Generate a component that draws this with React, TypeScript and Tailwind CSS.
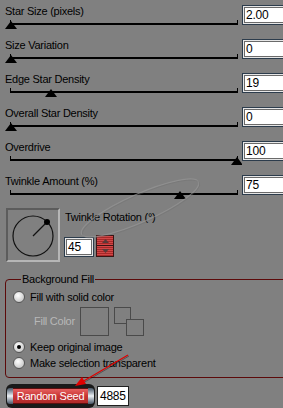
const rows = [
  { label: "Star Size (pixels)", value: "2.00", thumb: 11 },
  { label: "Size Variation", value: "0", thumb: 11 },
  { label: "Edge Star Density", value: "19", thumb: 51 },
  { label: "Overall Star Density", value: "0", thumb: 11 },
  { label: "Overdrive", value: "100", thumb: 237 },
  { label: "Twinkle Amount (%)", value: "75", thumb: 180 },
];

function ValueBox({ value, wide }: { value: string; wide?: boolean }) {
  return (
    <div
      className={
        wide
          ? "h-[20px] w-[60px] shrink-0 border border-[#2c3c4c] bg-[#e6e6e6] p-px"
          : "h-[20px] w-[30px] shrink-0 border border-[#2c3c4c] bg-[#e6e6e6] p-px"
      }
    >
      <div className="h-full border border-[#6a6a6a] bg-white pl-px text-[12px] leading-[14px] tracking-[-0.2px] text-black">
        {value}
      </div>
    </div>
  );
}

function Slider({ thumb }: { thumb: number }) {
  return (
    <svg width="242" height="13" className="mt-[2px] block">
      <rect x="10" y="3" width="228" height="2" fill="#000" />
      <rect x="10" y="0" width="1" height="5" fill="#000" />
      <rect x="237" y="0" width="1" height="5" fill="#000" />
      <polygon points={`${thumb},1 ${thumb - 6},9 ${thumb + 6},9`} fill="#000" />
    </svg>
  );
}

function Radio({ checked }: { checked?: boolean }) {
  return (
    <span className="flex h-[12px] w-[12px] shrink-0 items-center justify-center rounded-full border border-[#555] bg-[radial-gradient(circle_at_40%_35%,#ffffff,#d4d4d4_60%,#b8b8b8)]">
      {checked && <span className="h-[4px] w-[4px] rounded-full bg-black" />}
    </span>
  );
}

export default function App() {
  return (
    <div className="relative h-[408px] w-[283px] overflow-hidden bg-[#808080] font-['Liberation_Sans',Arial,sans-serif] text-[11px] leading-[13px] tracking-[-0.25px] text-black">
      <div className="pt-[5px]">
        {rows.map((r) => (
          <div key={r.label} className="flex h-[34px]">
            <div className="w-[242px] shrink-0">
              <div className="pl-[5px]">{r.label}</div>
              <Slider thumb={r.thumb} />
            </div>
            <ValueBox value={r.value} wide />
          </div>
        ))}
      </div>

      <div className="-mt-[1px] flex pl-[6px]">
        <div className="h-[54px] w-[54px] border-2 border-t-[#5c5c5c] border-l-[#5c5c5c] border-b-[#b6b6b6] border-r-[#b6b6b6]">
          <svg width="50" height="50" className="block">
            <circle cx="25" cy="26" r="20" fill="none" stroke="#111" strokeWidth="1.2" />
            <line x1="25" y1="26" x2="38" y2="13" stroke="#111" strokeWidth="1.2" />
            <circle cx="39" cy="12" r="3" fill="#000" />
          </svg>
        </div>
        <div className="ml-[4px] flex flex-col">
          <div className="pl-px pt-[3px]">Twinkle Rotation (°)</div>
          <div className="mt-[11px] flex items-end">
            <ValueBox value="45" />
            <div className="ml-[2px] flex h-[22px] w-[18px] flex-col border border-[#3a1414] bg-[#b83030]">
              <div className="flex h-[10px] items-center justify-center border-b border-[#3a1414] bg-[repeating-linear-gradient(180deg,#d04848_0px,#d04848_1px,#a82828_1px,#a82828_2px)]">
                <svg width="7" height="4">
                  <polygon points="3.5,0 0,4 7,4" fill="#5a3a3a" />
                </svg>
              </div>
              <div className="flex flex-1 items-center justify-center bg-[repeating-linear-gradient(180deg,#d04848_0px,#d04848_1px,#a82828_1px,#a82828_2px)]">
                <svg width="7" height="4">
                  <polygon points="0,0 7,0 3.5,4" fill="#5a3a3a" />
                </svg>
              </div>
            </div>
          </div>
        </div>
      </div>

      <fieldset className="ml-[5px] mt-[11px] w-[300px] rounded-[4px] border border-[#5c0a0a] pb-[6px] pl-[7px] pt-[3px]">
        <legend className="ml-[8px] px-px">Background Fill</legend>
        <div className="flex h-[16px] items-center gap-[5px]">
          <Radio />
          <span>Fill with solid color</span>
        </div>
        <div className="mt-[2px] flex h-[29px] items-center pl-[21px]">
          <span className="text-[#b8b8b8]">Fill Color</span>
          <div className="ml-[5px] h-[29px] w-[29px] border border-[#4a4a4a]" />
          <div className="relative ml-[5px] h-[29px] w-[30px]">
            <div className="absolute left-0 top-0 h-[17px] w-[17px] border border-[#4a4a4a]" />
            <div className="absolute left-[12px] top-[12px] h-[17px] w-[18px] border border-[#4a4a4a] bg-[#808080]" />
          </div>
        </div>
        <div className="mt-[3px] flex h-[16px] items-center gap-[5px]">
          <Radio checked />
          <span>Keep original image</span>
        </div>
        <div className="flex h-[16px] items-center gap-[5px]">
          <Radio />
          <span>Make selection transparent</span>
        </div>
      </fieldset>

      <div className="mt-[6px] flex items-center pl-[6px]">
        <div className="flex h-[24px] w-[89px] items-center rounded-[6px] bg-[#1a1a1a] px-[1px]">
          <div className="h-[16px] w-[6px] rounded-l-[3px] bg-gradient-to-b from-[#4a5868] via-[#eef2f6] to-[#4a5868]" />
          <div className="flex h-[16px] flex-1 items-center justify-center border-y border-[#5a1010] bg-gradient-to-b from-[#e66060] via-[#c83434] to-[#b02a2a] text-white">
            Random Seed
          </div>
          <div className="h-[16px] w-[6px] rounded-r-[3px] bg-gradient-to-b from-[#4a5868] via-[#eef2f6] to-[#4a5868]" />
        </div>
        <div className="ml-[2px] h-[20px] w-[32px] border border-[#202020] bg-white pl-[2px] text-[12px] leading-[18px]">
          4885
        </div>
      </div>

      <svg className="pointer-events-none absolute left-0 top-0" width="283" height="408">
        <ellipse cx="140" cy="208" rx="64" ry="14" transform="rotate(-24 140 208)" fill="none" stroke="#959595" strokeWidth="1.2" opacity="0.7" />
        <ellipse cx="141" cy="209" rx="64" ry="14" transform="rotate(-24 141 209)" fill="none" stroke="#6c6c6c" strokeWidth="0.8" opacity="0.4" />
        <line x1="129" y1="356" x2="83" y2="383" stroke="#000" strokeWidth="1" opacity="0.35" />
        <line x1="128" y1="355" x2="82" y2="382" stroke="#e00000" strokeWidth="1.3" />
        <polygon points="75,386 86,384 82,377" fill="#e00000" />
      </svg>
    </div>
  );
}
